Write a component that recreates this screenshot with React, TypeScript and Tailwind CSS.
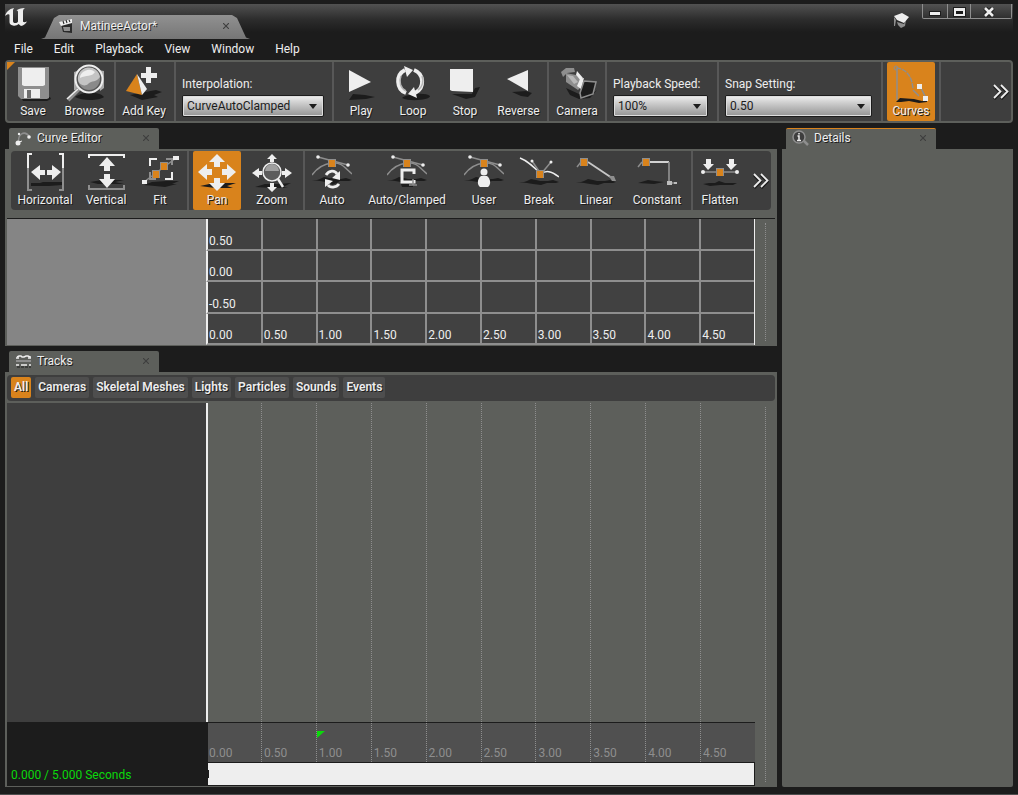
import type { ReactNode } from "react";

const WHITE = "#eeeeee";
const GREY = "#8e8e8e";
const DARK = "#1c1c1c";
const ORANGE = "#d9831c";

function Glyph({ children }: { children: ReactNode }) {
  return (
    <svg viewBox="0 0 40 40" className="h-10 w-10 shrink-0" fill="none" aria-hidden="true">
      {children}
    </svg>
  );
}

function GroundShadow({ y = 30 }: { y?: number }) {
  return <path d={`M0 ${y}h5l3-1 4-2 5 1 4 1h8l5-1 3 1 3 1-3 1h-9l-6 2-8-1-6-1z`} fill={DARK} />;
}

function KeyMark({ x, y }: { x: number; y: number }) {
  return (
    <g>
      <rect x={x - 4} y={y - 4} width="8" height="8" fill={GREY} />
      <rect x={x - 3} y={y - 3} width="6" height="7" fill={ORANGE} />
    </g>
  );
}

function SplineBase() {
  return (
    <g>
      <GroundShadow y={27} />
      <path d="M0 22C5 15 11 11 20 10S32 14 40 21" stroke={GREY} strokeWidth="1.4" />
      <path d="M6 4L36 12" stroke={GREY} strokeWidth="1.5" />
      <circle cx="6" cy="4" r="1.8" fill={WHITE} />
      <circle cx="36" cy="12" r="1.8" fill={WHITE} />
      <KeyMark x={20} y={10} />
    </g>
  );
}

const icons = {
  save: (
    <Glyph>
      <path d="M8 33h29l1 2-4 2H10z" fill={DARK} />
      <path d="M5 3h31v31l-2 1H8l-3-3z" fill={GREY} />
      <path d="M9 4h23v17l-2 1H11l-2-1z" fill={WHITE} />
      <path d="M11 25h16v9H11z" fill={WHITE} />
      <path d="M14 26h4v8h-4z" fill="#6e6e6e" />
    </Glyph>
  ),
  browse: (
    <Glyph>
      <path d="M10 33c6-5 24-6 29 0-5 4-22 4-29 0z" fill={DARK} />
      <path d="M9 8l6-2v20H9zM33 6l6 1v17l-4 3z" fill="#a8a8a8" />
      <path d="M14 25L3 36" stroke={GREY} strokeWidth="4" />
      <path d="M13 25L2 35" stroke={WHITE} strokeWidth="1.4" />
      <circle cx="24" cy="15" r="13.5" fill="#555555" stroke={WHITE} strokeWidth="2" />
      <circle cx="24" cy="15" r="11" fill="#8a8a8a" />
      <path d="M13 16a11 11 0 0 1 22-3c-4 6-8 3-12 7-3 3-9 1-10-4z" fill="#c4c4c4" />
      <path d="M15 14a9 8 0 0 1 15-6c-3 5-9 3-15 6z" fill={WHITE} />
    </Glyph>
  ),
  addKey: (
    <Glyph>
      <path d="M6 31l10-2 16-3 6 2-8 3 4 2-16 3z" fill={DARK} />
      <path d="M13 10l5 21L2 27z" fill={ORANGE} />
      <path d="M13 10l10 15-5 6z" fill={WHITE} />
      <path d="M22 3h5v6h6v5h-6v5h-5v-5h-5V9h5z" fill={WHITE} />
    </Glyph>
  ),
  play: (
    <Glyph>
      <path d="M8 36l4-6 12 1 10 2-9 2z" fill={DARK} />
      <path d="M8 6l22 12L8 28z" fill={WHITE} />
    </Glyph>
  ),
  loop: (
    <Glyph>
      <path d="M9 34c4-4 24-6 28-2 0 4-20 6-28 2z" fill={DARK} />
      <path d="M13 29A12 12.500 0 0 1 12 6" stroke={WHITE} strokeWidth="4" />
      <path d="M21 6a12.500 12.500 0 0 1 1 23" stroke={WHITE} strokeWidth="4" />
      <path d="M11 2l9 4-6 7zM24 34l-9-4 6-7z" fill={WHITE} />
      <path d="M13 27A10 11 0 0 1 8 12M25 26a10 11 0 0 0 4-14" stroke="#b5b5b5" strokeWidth="1.500" />
    </Glyph>
  ),
  stop: (
    <Glyph>
      <path d="M7 30h20l3-6 5-1-5 10-9 2z" fill={DARK} />
      <path d="M5 5h23v23l-21-1-2-1z" fill={WHITE} />
    </Glyph>
  ),
  reverse: (
    <Glyph>
      <path d="M13 28l14-1 6 2-4 4-7-1z" fill={DARK} />
      <path d="M8 15l21-9v21z" fill={WHITE} />
    </Glyph>
  ),
  camera: (
    <Glyph>
      <path d="M9 24l13 6 14-1 4-3-7 8-11 1-9-4z" fill={DARK} />
      <path d="M4 8l5-4h8l1 4-8 1-4 4z" fill={GREY} />
      <path d="M9 9l10 2 8 9-6 6-12-8z" fill={GREY} />
      <path d="M10 11l6 1 5 6-4 2z" fill="#b8b8b8" />
      <path d="M20 7l6 7-2 3-5-6z" fill={WHITE} />
      <path d="M20 22l3-7 4-1-3 11z" fill={WHITE} />
      <path d="M27 17l12 1-3 12-12 4-1-5z" fill={DARK} stroke={GREY} strokeWidth="1.500" />
    </Glyph>
  ),
  curves: (
    <Glyph>
      <path d="M5 38l4-4 14 1 8 2 5-1v2l-8 1-10-2-8 1z" fill={DARK} />
      <path d="M6 5v31" stroke={GREY} strokeWidth="1.500" />
      <path d="M5 4C17 5 21 14 22 25" stroke={GREY} strokeWidth="1.500" strokeDasharray="5 1" />
      <path d="M29 22l6 12M22 26l6 6" stroke={GREY} strokeWidth="1.500" />
      <circle cx="5" cy="4" r="2" stroke={GREY} />
      <rect x="26" y="20" width="5" height="5" fill={WHITE} />
      <rect x="32" y="32" width="5" height="5" fill={WHITE} />
    </Glyph>
  ),
  horizontal: (
    <Glyph>
      <path d="M6 30h9l3-1h19v3l-13 1H6z" fill={DARK} />
      <path d="M7 1H3v36h4M34 1h4v36h-4" stroke={GREY} strokeWidth="2" />
      <path d="M7 1H3v14M34 1h4v14" stroke={WHITE} strokeWidth="2" />
      <path d="M6 19l9-7v5h5v5h-5v5zM36 19l-9-7v5h-5v5h5v5z" fill={WHITE} />
    </Glyph>
  ),
  vertical: (
    <Glyph>
      <path d="M4 29l12-2h22l-9 2 9 2H12z" fill={DARK} />
      <path d="M3 5V2h35v3" stroke={WHITE} strokeWidth="2" />
      <path d="M3 32v4h35v-4" stroke={GREY} strokeWidth="2" />
      <path d="M21 4l8 9h-5v5h-6v-5h-5zM21 35l8-9h-5v-5h-6v5h-5z" fill={WHITE} />
    </Glyph>
  ),
  fit: (
    <Glyph>
      <path d="M4 32l8-3 14-1h13l-7 3h5l-12 3-10-1z" fill={DARK} />
      <path d="M4 29L36 5" stroke={GREY} strokeWidth="1.500" />
      <path d="M10 13V6h7M32 19v7h-7" stroke={WHITE} strokeWidth="2" />
      <path d="M26 6h6v6M10 19v7h6" stroke={GREY} strokeWidth="2" />
      <KeyMark x={24} y={13} />
      <KeyMark x={16} y={21} />
      <rect x="2" y="27" width="5" height="4" fill={WHITE} />
      <rect x="33" y="3" width="6" height="4" fill={WHITE} />
    </Glyph>
  ),
  pan: (
    <Glyph>
      <path d="M3 33l14-3h22l-9 3 6 2H18z" fill={DARK} />
      <path
        d="M20 1l8 8h-5v5h-6V9h-5zM20 38l8-8h-5v-5h-6v5h-5zM1 19l9-8v5h5v6h-5v5zM39 19l-9-8v5h-5v6h5v5z"
        fill={WHITE}
      />
    </Glyph>
  ),
  zoom: (
    <Glyph>
      <path d="M3 34l10-3h12l14-1-8 4 5 1H20z" fill={DARK} />
      <path
        d="M20 1l5 5h-3v3h-4V6h-3zM20 39l5-5h-3v-4h-4v4h-3zM0 20l7-5v3h3v4H7v3zM40 20l-7-5v3h-3v4h3v3z"
        fill={WHITE}
      />
      <path d="M26 26l5 8" stroke={WHITE} strokeWidth="2.500" />
      <circle cx="20" cy="19" r="9" fill="#5c5c5c" stroke={WHITE} strokeWidth="1.500" />
      <path d="M13 18a7 7 0 0 1 14 0z" fill="#a0a0a0" />
    </Glyph>
  ),
  auto: (
    <Glyph>
      <SplineBase />
      <path d="M16 27l7-4 4 6-7 3z" fill={DARK} />
      <path d="M14 22c3-5 9-5 11-1" stroke={WHITE} strokeWidth="2.800" />
      <path d="M27 31c-3 4-9 4-11 1" stroke={WHITE} strokeWidth="2.800" />
      <path d="M28 18v9l-8-2zM13 34v-8l8 2z" fill={WHITE} />
    </Glyph>
  ),
  clamped: (
    <Glyph>
      <SplineBase />
      <path d="M14 31h12v3H15z" fill={DARK} />
      <path d="M27 21v-4H15v12h12v-2" stroke={WHITE} strokeWidth="3" />
      <path d="M26 26v6M22 32h8" stroke={GREY} strokeWidth="1.500" />
    </Glyph>
  ),
  user: (
    <Glyph>
      <SplineBase />
      <circle cx="20" cy="19" r="3.500" fill={WHITE} />
      <path d="M17 23h6c4 3 4 9 1 11h-8c-3-2-3-8 1-11z" fill={WHITE} />
    </Glyph>
  ),
  breakKey: (
    <Glyph>
      <GroundShadow y={29} />
      <path d="M1 5c8 3 14 9 21 16 5-4 10-3 18 3" stroke={WHITE} strokeWidth="1.500" />
      <path d="M13 8l9 13L32 9" stroke={GREY} strokeWidth="1.500" />
      <circle cx="13" cy="8" r="1.500" fill={WHITE} />
      <circle cx="32" cy="9" r="1.500" fill={WHITE} />
      <KeyMark x={21} y={21} />
    </Glyph>
  ),
  linear: (
    <Glyph>
      <GroundShadow y={29} />
      <path d="M1 14l4-5" stroke={GREY} strokeWidth="1.500" />
      <path d="M12 9l24 16" stroke="#c8c8c8" strokeWidth="1.700" />
      <path d="M33 23h5l2 5h-4z" fill={GREY} />
      <KeyMark x={8} y={9} />
    </Glyph>
  ),
  constant: (
    <Glyph>
      <path d="M1 30l10-3 7 1 9 1-10 2z" fill={DARK} />
      <path d="M1 14l4-5" stroke={GREY} strokeWidth="1.500" />
      <path d="M13 9h19" stroke={WHITE} strokeWidth="1.700" />
      <path d="M32 9v21h8" stroke={GREY} strokeWidth="1.700" />
      <path d="M30 28h5v4h-5zM37 29h3v2h-3z" fill="#bdbdbd" />
      <KeyMark x={9} y={9} />
    </Glyph>
  ),
  flatten: (
    <Glyph>
      <path d="M3 31l6-1h6l4-2 6 2h12l-4 2H20l-10 1z" fill={DARK} />
      <path d="M2 19h35" stroke={GREY} strokeWidth="1.500" />
      <circle cx="3" cy="19" r="2" fill={WHITE} />
      <circle cx="37" cy="19" r="2" fill={WHITE} />
      <path d="M6 6h5v5h3l-6 6-5-6h3zM29 6h5v5h3l-6 6-5-6h3z" fill={WHITE} />
      <KeyMark x={20} y={19} />
    </Glyph>
  ),
};

function ToolButton({
  label,
  icon,
  width,
  active = false,
}: {
  label: string;
  icon: ReactNode;
  width: string;
  active?: boolean;
}) {
  return (
    <button
      type="button"
      aria-pressed={active}
      className={`flex h-[59px] shrink-0 flex-col items-center rounded-xs pt-0.5 whitespace-nowrap ${width} ${
        active ? "bg-[#d9831c]" : ""
      }`}
    >
      {icon}
      <span className="leading-[15px] [text-shadow:1px_1px_0_#1c1c1c]">{label}</span>
    </button>
  );
}

function Group({ children, className = "px-1" }: { children: ReactNode; className?: string }) {
  return <div className={`flex shrink-0 gap-1 border-r-2 border-[#585858] ${className}`}>{children}</div>;
}

function Dropdown({ id, label, value, width }: { id: string; label: string; value: string; width: string }) {
  return (
    <div className="flex flex-col pt-[15px]">
      <label htmlFor={id} className="pb-[3px] leading-[15px]">
        {label}
      </label>
      <div className={`relative ${width}`}>
        <select
          id={id}
          defaultValue={value}
          className="h-[22px] w-full appearance-none rounded-xs border border-[#1c1c1c] bg-linear-to-b from-[#eeeeee] to-[#949494] px-1 leading-4 text-[#1c1c1c] outline-1 -outline-offset-2 outline-[#dddddd]"
        >
          <option>{value}</option>
        </select>
        <svg
          viewBox="0 0 8 5"
          className="pointer-events-none absolute top-[9px] right-[7px] h-[5px] w-2"
          aria-hidden="true"
        >
          <path d="M0 0h8L4 5z" fill={DARK} />
        </svg>
      </div>
    </div>
  );
}

function MoreButton({ label }: { label: string }) {
  return (
    <button type="button" aria-label={label} className="ml-auto flex shrink-0 items-center">
      <svg viewBox="0 0 16 16" className="h-4 w-4" fill="none" aria-hidden="true">
        <path d="M1 2l6.500 6.500L1 15M8 2l6.500 6.500L8 15" stroke={DARK} strokeWidth="3" />
        <path d="M1 1l6.500 6.500L1 14M8 1l6.500 6.500L8 14" stroke={WHITE} strokeWidth="1.800" />
      </svg>
    </button>
  );
}

function CloseMark({ title }: { title: string }) {
  return (
    <button type="button" aria-label={`Close ${title}`} className="ml-auto">
      <svg viewBox="0 0 6 6" className="h-1.5 w-1.5" fill="none" aria-hidden="true">
        <path d="M0 0l6 6M6 0L0 6" stroke="#3e3e3e" strokeWidth="1.100" />
      </svg>
    </button>
  );
}

function PanelTab({ title, icon, accent = false }: { title: string; icon: ReactNode; accent?: boolean }) {
  return (
    <div
      className={`ml-1 flex h-[21px] w-[150px] items-center rounded-t-xs bg-[#5d5f5b] pr-2.5 pl-1.5 ${
        accent ? "border-t border-[#d9831c] pb-0.5" : "pb-px"
      }`}
    >
      <svg viewBox="0 0 18 18" className="mr-1 h-[18px] w-[18px]" fill="none" aria-hidden="true">
        {icon}
      </svg>
      <h2 className="leading-4 [text-shadow:1px_1px_0_#1c1c1c]">{title}</h2>
      <CloseMark title={title} />
    </div>
  );
}

const times = ["0.00", "0.50", "1.00", "1.50", "2.00", "2.50", "3.00", "3.50", "4.00", "4.50"];
const values = ["0.50", "0.00", "-0.50"];
const filters = ["All", "Cameras", "Skeletal Meshes", "Lights", "Particles", "Sounds", "Events"];
const menus = ["File", "Edit", "Playback", "View", "Window", "Help"];

function Gutter() {
  return (
    <div className="w-5 shrink-0 py-1 pl-2.5">
      <div className="h-full border-l border-dotted border-[#8e8e8e]" />
    </div>
  );
}

function CurveGraph() {
  return (
    <div className="mx-0.5 mt-2 flex h-[127px] border-t border-[#1c1c1c]">
      <div className="w-[199px] shrink-0 bg-[#858585]" />
      <div className="grid flex-1 grid-rows-4 border-r border-[#eeeeee] bg-[#414141]">
        {[...values, "time"].map((row) => (
          <div key={row} className="grid grid-cols-10">
            {times.map((time, i) => (
              <div
                key={time}
                className={`flex items-end border-b-2 border-l-2 border-b-[#8e8e8e] pl-px leading-[15px] ${
                  i === 0 ? "border-l-[#eeeeee]" : "border-l-[#8e8e8e]"
                }`}
              >
                {row === "time" ? time : i === 0 ? row : ""}
              </div>
            ))}
          </div>
        ))}
      </div>
      <Gutter />
    </div>
  );
}

function TrackArea() {
  return (
    <div className="mx-0.5 mt-0.5 mb-px flex flex-1">
      <div className="flex w-[199px] shrink-0 flex-col">
        <div className="flex-1 bg-[#3e3e3e]" />
        <div className="flex h-16 items-end bg-[#1c1c1c] pb-[3px] pl-1 leading-[15px] text-[#0bd90b]">
          0.000 / 5.000 Seconds
        </div>
      </div>
      <div className="flex flex-1 flex-col">
        <div className="grid flex-1 grid-cols-10">
          {times.map((time, i) => (
            <div
              key={time}
              className={i === 0 ? "border-l-2 border-[#eeeeee]" : "border-l border-dotted border-[#8e8e8e]"}
            />
          ))}
        </div>
        <div className="grid h-[41px] grid-cols-10 border-y border-[#1c1c1c] bg-[#505050]">
          {times.map((time, i) => (
            <div
              key={time}
              className={`flex flex-col justify-between pt-2 pb-px leading-[15px] text-[#8e8e8e] ${
                i === 0 ? "border-l-2 border-[#1c1c1c] pl-px" : "border-l border-dotted border-[#8e8e8e]"
              }`}
            >
              <span className="h-[7px]">
                {time === "1.00" && (
                  <svg viewBox="0 0 8 7" className="h-[7px] w-2" aria-hidden="true">
                    <path d="M0 0h8L0 7z" fill="#0bd90b" />
                  </svg>
                )}
              </span>
              <span className={i === 0 ? "" : "pl-0.5"}>{time}</span>
            </div>
          ))}
        </div>
        <div className="h-[23px] border-r border-b border-l-2 border-[#1c1c1c] bg-[#eeeeee]">
          <div className="mt-[7px] h-2 w-px bg-[#1c1c1c]" />
        </div>
      </div>
      <Gutter />
    </div>
  );
}

function TitleBar() {
  return (
    <div className="flex h-[35px] bg-linear-to-b from-[#525252] via-[#2c2c2c] via-45% to-[#1c1c1c] to-80%">
      <svg viewBox="0 0 22 20" className="mt-[3px] h-5 w-[22px] shrink-0" aria-hidden="true">
        <path
          d="M0 9C1 5 4 2 9 1L8 3v11c0 1.500 1 2 2 2 1.500 0 2.500-.5 3-1.500V5c0-1-.5-1.500-1.500-1.500C13 2 16 1 20 1c-1.500 1-2 2-2 3.500V14c0 1.500 1.500 1.500 4 .5-1.500 2.500-3.500 4-6 4.500L13.500 17C12 18.500 10 19 8 18.500 5.500 18 4.500 17 4.500 15V8C4.500 6.500 2 7 0 9z"
          fill={WHITE}
        />
      </svg>
      <div className="mt-[11px] ml-3.5 flex h-6 w-[209px] shrink-0 items-center bg-linear-to-b from-[#919191] to-[#767676] pr-[21px] pb-0.5 pl-[17px] [clip-path:polygon(0_100%,4px_94%,13px_12%,18px_0,calc(100%_-_18px)_0,calc(100%_-_13px)_12%,calc(100%_-_4px)_94%,100%_100%)]">
        <svg viewBox="0 0 16 16" className="mr-1.5 h-4 w-4" fill="none" aria-hidden="true">
          <path d="M3 6l11-1v10l-9-1z" fill="#2a2a2a" />
          <path d="M5 9h7v4H6z" fill={GREY} />
          <path d="M1 4l2 4 11-3V1L1 4z" fill={WHITE} />
          <path d="M5 3l1 3M8 2l1 3M11 2l1 2" stroke="#2a2a2a" strokeWidth="1.100" />
        </svg>
        <h1 className="[text-shadow:1px_1px_0_#2a2a2a]">MatineeActor*</h1>
        <CloseMark title="MatineeActor" />
      </div>
      <svg viewBox="0 0 16 16" className="mt-2 ml-auto h-4 w-4" aria-hidden="true">
        <path d="M3 10l7 2 2-4-1 6-4 2-3-3z" fill={GREY} />
        <path d="M0 4l8-3 7 4-5 6-7-3z" fill={WHITE} />
        <path d="M0 5l2 3-1 6H0z" fill={GREY} />
      </svg>
      <div className="mr-px ml-3 flex h-[15px] rounded-b-xs border border-t-0 border-[#8e8e8e] bg-linear-to-b from-[#525252] to-[#303030]">
        <button type="button" aria-label="Minimize" className="flex w-[25px] items-center justify-center border-r border-[#8e8e8e] pt-1">
          <svg viewBox="0 0 12 5" className="h-[5px] w-3" aria-hidden="true">
            <path d="M0 0h12v5H0z" fill={DARK} />
            <path d="M1 1h10v3H1z" fill={WHITE} />
          </svg>
        </button>
        <button type="button" aria-label="Maximize" className="flex w-[23px] items-center justify-center border-r border-[#8e8e8e] pt-0.5">
          <svg viewBox="0 0 13 10" className="h-2.5 w-[13px]" fill="none" aria-hidden="true">
            <path d="M0 0h13v10H0z" fill={DARK} />
            <path d="M1 1h11v8H1zM3 4v3h7V4z" fill={WHITE} fillRule="evenodd" />
          </svg>
        </button>
        <button type="button" aria-label="Close window" className="flex w-10 items-center justify-center pr-1 pt-px">
          <svg viewBox="0 0 12 10" className="h-2.5 w-3" fill="none" aria-hidden="true">
            <path d="M2 1l8 8M10 1L2 9" stroke={DARK} strokeWidth="4.500" />
            <path d="M2 1l8 8M10 1L2 9" stroke={WHITE} strokeWidth="2.600" />
          </svg>
        </button>
      </div>
    </div>
  );
}

export default function App() {
  return (
    <div className="flex min-h-screen flex-col border-b border-[#4e4e4e] bg-[#1c1c1c] px-[5px] pt-1 pb-[7px] font-[Roboto,sans-serif] text-[12px] text-[#eeeeee]">
      <header>
        <TitleBar />
        <nav className="flex h-[21px] items-center gap-[21px] pb-0.5 pl-[9px]">
          {menus.map((menu) => (
            <button key={menu} type="button" className="leading-4">
              {menu}
            </button>
          ))}
        </nav>
      </header>

      <div className="flex items-stretch rounded-sm border-2 border-[#5d5f5b] bg-[#3e3e3e] pr-0.5">
        <div className="-mr-2 h-2 w-2 bg-[#d9831c] [clip-path:polygon(0_0,100%_0,0_100%)]" />
        <Group>
          <ToolButton label="Save" icon={icons.save} width="w-11" />
          <ToolButton label="Browse" icon={icons.browse} width="w-[51px]" />
        </Group>
        <Group className="pr-1.5 pl-1">
          <ToolButton label="Add Key" icon={icons.addKey} width="w-12" />
        </Group>
        <Group className="pr-2 pl-1.5">
          <Dropdown id="interpolation" label="Interpolation:" value="CurveAutoClamped" width="w-[142px]" />
        </Group>
        <Group className="px-[3px]">
          <ToolButton label="Play" icon={icons.play} width="w-12" />
          <ToolButton label="Loop" icon={icons.loop} width="w-12" />
          <ToolButton label="Stop" icon={icons.stop} width="w-12" />
          <ToolButton label="Reverse" icon={icons.reverse} width="w-[51px]" />
        </Group>
        <Group>
          <ToolButton label="Camera" icon={icons.camera} width="w-12" />
        </Group>
        <Group className="pr-[9px] pl-1.5">
          <Dropdown id="playback-speed" label="Playback Speed:" value="100%" width="w-[95px]" />
        </Group>
        <Group className="pr-[9px] pl-1.5">
          <Dropdown id="snap-setting" label="Snap Setting:" value="0.50" width="w-[147px]" />
        </Group>
        <Group>
          <ToolButton label="Curves" icon={icons.curves} width="w-12" active />
        </Group>
        <MoreButton label="More toolbar actions" />
      </div>

      <main className="flex flex-1 gap-[5px] pt-[5px]">
        <div className="flex min-w-0 flex-1 flex-col">
          <section>
            <PanelTab
              title="Curve Editor"
              icon={
                <g>
                  <path d="M4 14C2 6 9 0 15 8" stroke={GREY} strokeWidth="1.500" />
                  <path d="M4 13l3-1" stroke={WHITE} />
                  <circle cx="3" cy="14" r="2.500" fill={WHITE} />
                  <circle cx="4" cy="5" r="1.200" fill={WHITE} />
                  <circle cx="14" cy="8" r="1.800" fill={WHITE} />
                </g>
              }
            />
            <div className="bg-[#5d5f5b] pt-0.5 pb-px">
              <div className="mr-1.5 ml-1.5 flex rounded-sm bg-[#3e3e3e] pr-0.5">
                <Group>
                  <ToolButton label="Horizontal" icon={icons.horizontal} width="w-[60px]" />
                  <ToolButton label="Vertical" icon={icons.vertical} width="w-[54px]" />
                  <ToolButton label="Fit" icon={icons.fit} width="w-[46px]" />
                </Group>
                <Group>
                  <ToolButton label="Pan" icon={icons.pan} width="w-12" active />
                  <ToolButton label="Zoom" icon={icons.zoom} width="w-[54px]" />
                </Group>
                <Group>
                  <ToolButton label="Auto" icon={icons.auto} width="w-[46px]" />
                  <ToolButton label="Auto/Clamped" icon={icons.clamped} width="w-24" />
                  <ToolButton label="User" icon={icons.user} width="w-[50px]" />
                  <ToolButton label="Break" icon={icons.breakKey} width="w-[52px]" />
                  <ToolButton label="Linear" icon={icons.linear} width="w-[54px]" />
                  <ToolButton label="Constant" icon={icons.constant} width="w-[60px]" />
                </Group>
                <div className="pl-1">
                  <ToolButton label="Flatten" icon={icons.flatten} width="w-[46px]" />
                </div>
                <MoreButton label="More curve actions" />
              </div>
              <CurveGraph />
            </div>
          </section>

          <section className="flex flex-1 flex-col pt-[5px]">
            <PanelTab
              title="Tracks"
              icon={
                <g>
                  <path d="M1 9h15" stroke={GREY} strokeWidth="2" />
                  <path d="M2 5l2-1h2l1 1h2l2-1h2l2 1h1" stroke={WHITE} strokeWidth="1.500" />
                  <path d="M1 6h3M13 6h3M1 13h3M6 13h6M14 13h2" stroke={WHITE} strokeWidth="1.500" />
                  <path d="M2 15h14" stroke={DARK} strokeDasharray="3 1" />
                </g>
              }
            />
            <div className="flex flex-1 flex-col bg-[#5d5f5b] pt-[3px]">
              <div className="mx-0.5 flex gap-1 rounded-sm bg-[#3e3e3e] px-1 pt-0.5 pb-[3px]">
                {filters.map((filter) => (
                  <button
                    key={filter}
                    type="button"
                    className={`h-[21px] rounded-xs px-[3px] pb-0.5 font-semibold [text-shadow:1px_1px_0_#1c1c1c] ${
                      filter === "All" ? "bg-[#d9831c]" : "bg-[#4e4e4e]"
                    }`}
                  >
                    {filter}
                  </button>
                ))}
              </div>
              <TrackArea />
            </div>
          </section>
        </div>

        <aside className="flex w-[23%] max-w-[231px] flex-col">
          <PanelTab
            title="Details"
            accent
            icon={
              <g>
                <path d="M11 11l5 5" stroke={GREY} strokeWidth="2.500" />
                <circle cx="7" cy="8" r="6" fill="#3e3e3e" stroke={GREY} strokeWidth="1.500" />
                <path d="M7 4v1.500M5.500 7H7v4M5 11.500h4" stroke={WHITE} strokeWidth="1.500" />
              </g>
            }
          />
          <div className="flex-1 rounded-b-xs bg-[#5d5f5b]" />
        </aside>
      </main>
    </div>
  );
}
